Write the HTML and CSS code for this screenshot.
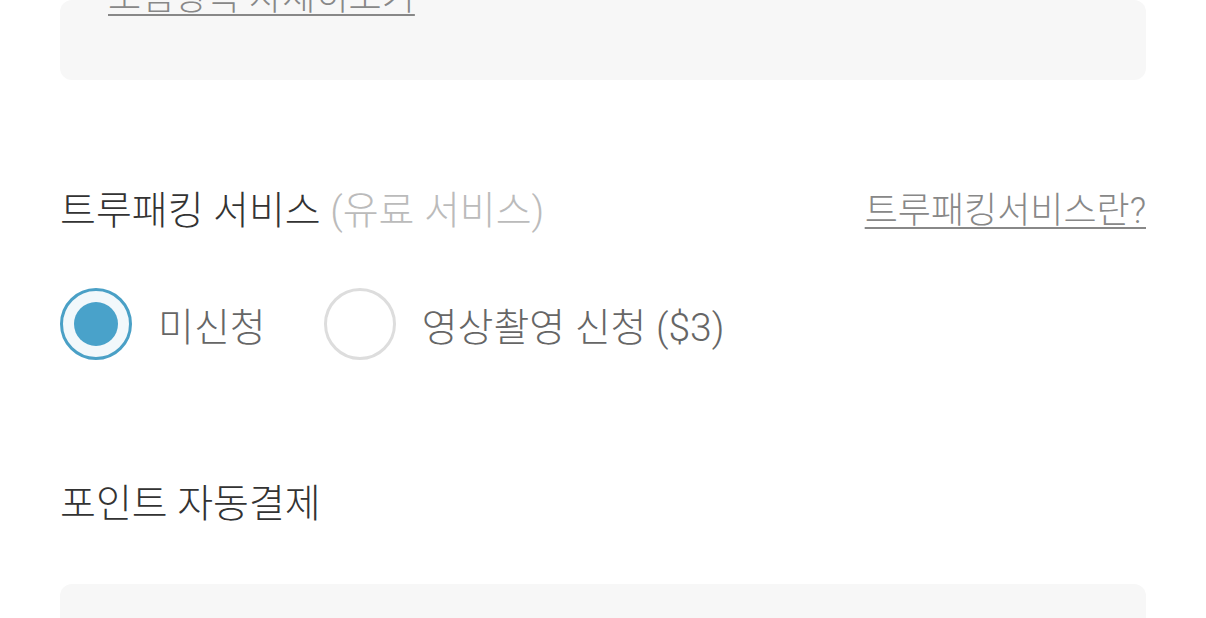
FILE: index.html
```html
<!DOCTYPE html>
<html lang="ko">
<head>
<meta charset="utf-8">
<link rel="stylesheet" href="styles.css">
</head>
<body>
<main class="page">
  <section class="box box-top">
    <a class="link link-detail" href="#">보험항목 자세히보기</a>
  </section>

  <section class="section">
    <div class="section-head">
      <h2 class="title">트루패킹 서비스 <span class="title-sub">(유료 서비스)</span></h2>
      <a class="link" href="#">트루패킹서비스란?</a>
    </div>
    <div class="radios">
      <label class="radio">
        <input type="radio" name="packing" checked>
        <span class="radio-mark"></span>
        <span class="radio-label">미신청</span>
      </label>
      <label class="radio">
        <input type="radio" name="packing">
        <span class="radio-mark"></span>
        <span class="radio-label">영상촬영 신청 ($3)</span>
      </label>
    </div>
  </section>

  <section class="section section-point">
    <h2 class="title">포인트 자동결제</h2>
    <div class="box box-bottom"></div>
  </section>
</main>
</body>
</html>
```

FILE: styles.css
```css
* { box-sizing: border-box; }

html, body {
  margin: 0;
  padding: 0;
  background: #fff;
  overflow: hidden;
}

body {
  font-family: "Roboto", "Noto Sans CJK KR", sans-serif;
  font-weight: 300;
  color: #333;
}

.page {
  padding: 0 60px;
}

.box {
  background: #f7f7f7;
  border-radius: 12px;
}

.box-top {
  height: 80px;
  padding: 0 48px;
  display: flex;
  align-items: flex-start;
}

.link {
  font-size: 36px;
  color: #888;
  text-decoration: underline;
  text-decoration-thickness: 2px;
  text-underline-offset: 4px;
}

.link-detail {
  margin-top: -22px;
  line-height: 40px;
}

.section {
  margin-top: 103px;
}

.section-head {
  display: flex;
  justify-content: space-between;
  align-items: center;
  height: 48px;
}

.title {
  margin: 0;
  font-size: 39px;
  font-weight: 300;
  color: #333;
}

.title-sub {
  color: #bbb;
}

.radios {
  display: flex;
  gap: 58px;
  margin-top: 57px;
  align-items: center;
}

.radio {
  display: flex;
  align-items: center;
  gap: 26px;
  cursor: pointer;
}

.radio input {
  display: none;
}

.radio-mark {
  width: 72px;
  height: 72px;
  border-radius: 50%;
  border: 3px solid #ddd;
  background: #fff;
  display: flex;
  align-items: center;
  justify-content: center;
}

.radio input:checked + .radio-mark {
  border-color: #4aa0c6;
  background: #f2f8fb;
}

.radio input:checked + .radio-mark::after {
  content: "";
  width: 44px;
  height: 44px;
  border-radius: 50%;
  background: #49a2ca;
}

.radio-label {
  font-size: 39px;
  color: #666;
}

.section-point {
  margin-top: 120px;
}

.section-point .title {
  line-height: 48px;
}

.box-bottom {
  margin-top: 56px;
  height: 80px;
}
```
